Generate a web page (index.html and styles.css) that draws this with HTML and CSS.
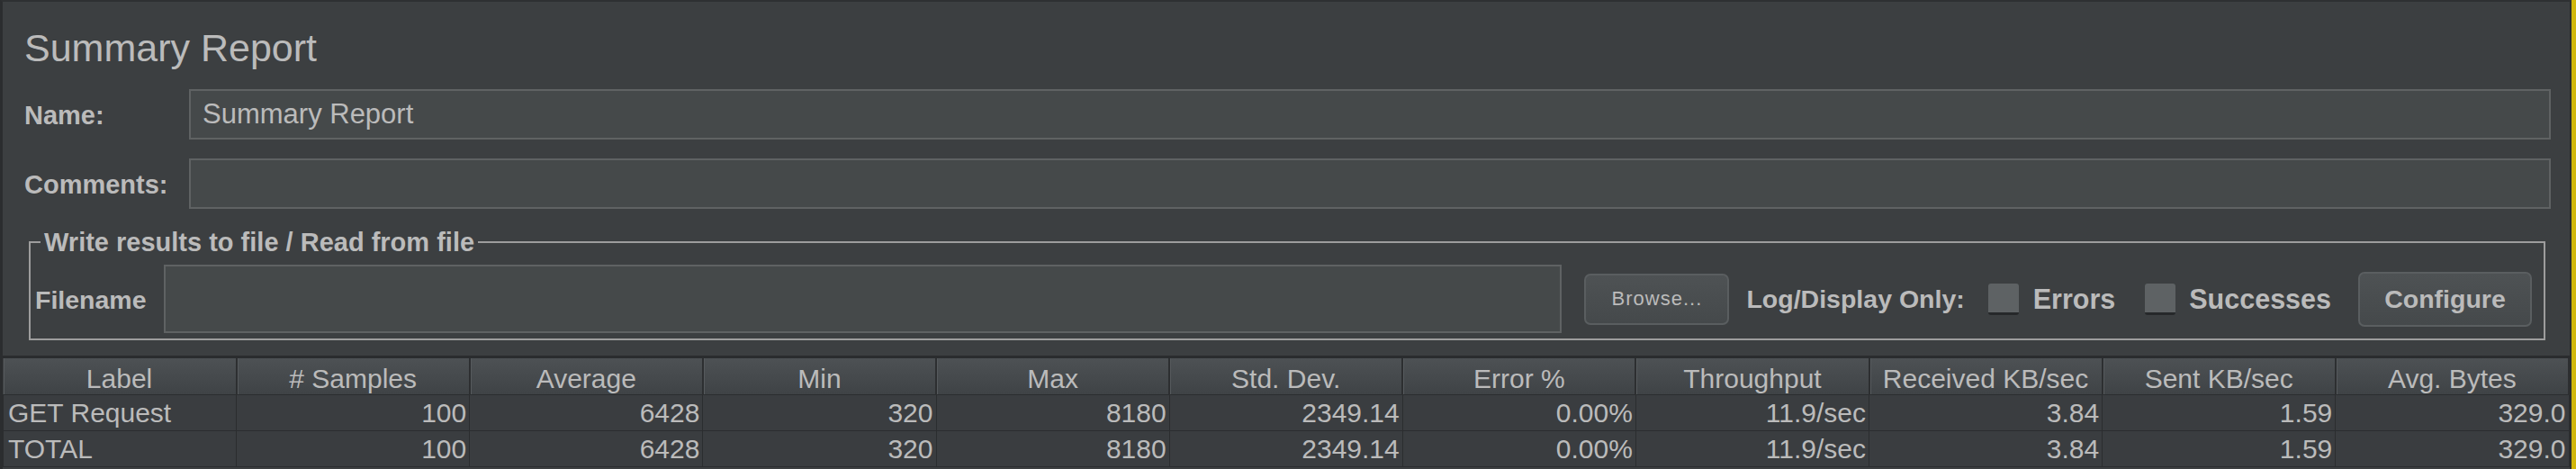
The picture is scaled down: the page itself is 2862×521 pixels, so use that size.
FILE: index.html
```html
<!DOCTYPE html>
<html lang="en">

<head>
    <meta charset="UTF-8">
    <meta name="viewport" content="width=device-width, initial-scale=1.0">
    <title>Summary Report</title>
    <link rel="stylesheet" href="styles.css">
</head>

<body>
    <div class="window">
        <div class="panel">
            <div class="form">
                <h1 class="title">Summary Report</h1>
                <div class="field-row">
                    <label class="field-label">Name:</label>
                    <div class="text-box">Summary Report</div>
                </div>
                <div class="field-row comments">
                    <label class="field-label">Comments:</label>
                    <div class="text-box"></div>
                </div>
                <fieldset class="file-group">
                    <legend>Write results to file / Read from file</legend>
                    <div class="file-row">
                        <span class="file-label">Filename</span>
                        <div class="text-box file-box"></div>
                        <button class="btn browse">Browse...</button>
                        <span class="log-label">Log/Display Only:</span>
                        <span class="check"></span>
                        <span class="check-label">Errors</span>
                        <span class="check second"></span>
                        <span class="check-label">Successes</span>
                        <button class="btn configure">Configure</button>
                    </div>
                </fieldset>
            </div>
            <!-- tabla de resultados -->
            <div class="results">
                <table id="report">
                    <tr>
                        <th>Label</th>
                        <th># Samples</th>
                        <th>Average</th>
                        <th>Min</th>
                        <th>Max</th>
                        <th>Std. Dev.</th>
                        <th>Error %</th>
                        <th>Throughput</th>
                        <th>Received KB/sec</th>
                        <th>Sent KB/sec</th>
                        <th>Avg. Bytes</th>
                    </tr>
                    <tr>
                        <td class="name">GET Request</td>
                        <td>100</td>
                        <td>6428</td>
                        <td>320</td>
                        <td>8180</td>
                        <td>2349.14</td>
                        <td>0.00%</td>
                        <td>11.9/sec</td>
                        <td>3.84</td>
                        <td>1.59</td>
                        <td>329.0</td>
                    </tr>
                    <tr>
                        <td class="name">TOTAL</td>
                        <td>100</td>
                        <td>6428</td>
                        <td>320</td>
                        <td>8180</td>
                        <td>2349.14</td>
                        <td>0.00%</td>
                        <td>11.9/sec</td>
                        <td>3.84</td>
                        <td>1.59</td>
                        <td>329.0</td>
                    </tr>
                </table>
            </div>
        </div>
        <div class="edge"></div>
    </div>
</body>

</html>
```

FILE: styles.css
```css
body {
    margin: 0;
    padding: 0;
    background-color: #3c3f41;
    font-family: "Liberation Sans", Arial, sans-serif;
    color: #bbbbbb;
}

.window {
    display: flex;
    height: 521px;
    overflow: hidden;
}

.panel {
    flex: 1;
    min-width: 0;
    border-top: 2px solid #2e3032;
    border-left: 3px solid #2b2d2f;
    border-right: 2px solid #2b2d2f;
}

.edge {
    width: 5px;
    background-color: #d1b70c;
}

.form {
    padding: 0 21px 0 24px;
}

.title {
    margin: 0;
    padding-top: 27px;
    font-size: 43px;
    font-weight: normal;
    line-height: 48px;
}

.field-row {
    display: flex;
    align-items: center;
    margin-top: 22px;
}

.field-row.comments {
    margin-top: 21px;
}

.field-label {
    width: 183px;
    flex: none;
    font-size: 29px;
    font-weight: bold;
    padding-top: 3px;
}

.text-box {
    flex: 1;
    height: 52px;
    box-sizing: content-box;
    border: 2px solid #5f6263;
    background-color: #45494a;
    padding: 0 13px;
    font-size: 31px;
    line-height: 52px;
    color: #bbbbbb;
}

.file-group {
    margin: 20px 6px 0 5px;
    padding: 8px 13px 6px 5px;
    border: 2px solid #9d9d9d;
}

.file-group legend {
    margin-left: 6px;
    padding: 0 4px;
    font-size: 29px;
    font-weight: bold;
    line-height: 34px;
}

.file-row {
    display: flex;
    align-items: center;
}

.file-label {
    font-size: 28.5px;
    font-weight: bold;
    margin-right: 19px;
    padding-top: 2px;
}

.file-box {
    height: 72px;
}

.btn {
    font-family: inherit;
    color: #bbbbbb;
    background: linear-gradient(#4e5254, #45494b);
    border: 2px solid #5a5e60;
    border-radius: 7px;
    padding: 0;
}

.browse {
    width: 161px;
    height: 57px;
    margin-left: 25px;
    font-size: 22px;
    letter-spacing: 1px;
}

.configure {
    width: 193px;
    height: 61px;
    margin-left: 30px;
    font-size: 28.5px;
    font-weight: bold;
}

.log-label {
    margin-left: 19px;
    font-size: 28.5px;
    font-weight: bold;
}

.check-label {
    font-size: 30.5px;
    font-weight: bold;
}

.check {
    width: 34px;
    height: 32px;
    margin: 0 16px 0 26px;
    background-color: #5e6264;
    border-bottom: 3px solid #26282a;
    border-radius: 3px;
}

.check.second {
    margin: 0 15px 0 33px;
}

.results {
    margin-top: 17px;
    border-top: 3px solid #2a2c2e;
}

#report {
    width: 100%;
    table-layout: fixed;
    border-collapse: collapse;
    font-size: 30px;
}

#report th {
    height: 39px;
    padding: 6px 0 0 0;
    box-sizing: border-box;
    font-weight: normal;
    text-align: center;
    background: linear-gradient(#4d5154, #3f4346);
    border-right: 2px solid #2d2f31;
    border-bottom: 1px solid #2b2d2f;
    box-shadow: inset 1px 0 #565a5d;
}

#report td {
    height: 40px;
    padding: 0 3px;
    box-sizing: border-box;
    text-align: right;
    background-color: #3a3d40;
    border: 1px solid #2b2d2f;
}

#report td.name {
    text-align: left;
    padding-left: 5px;
}
```
